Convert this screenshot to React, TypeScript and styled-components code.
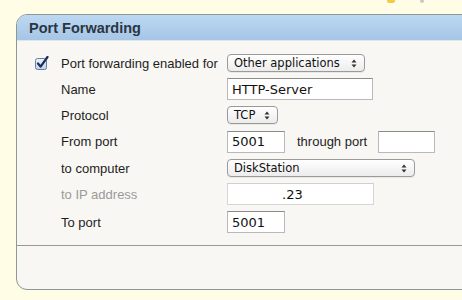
import React from 'react'
import styled, { createGlobalStyle } from 'styled-components'

const GlobalStyle = createGlobalStyle`
  html, body {
    margin: 0;
    padding: 0;
    background: #fffde6;
    overflow: hidden;
  }
  body {
    font-family: "Liberation Sans", Arial, sans-serif;
  }
`

const Page = styled.div`
  width: 462px;
  height: 300px;
  overflow: hidden;
`

const TopBar = styled.div`
  height: 14px;
  display: flex;
  align-items: flex-start;
  gap: 25px;
  padding-left: 387px;
`

const TopIcon = styled.span<{ $color: string; $w: number }>`
  display: block;
  width: ${(p) => p.$w}px;
  height: 3px;
  border-radius: 0 0 2px 2px;
  background: ${(p) => p.$color};
`

const Panel = styled.div`
  margin-left: 16px;
  margin-right: -30px;
  height: 274px;
  border: 1px solid #8e9892;
  border-radius: 11px;
  background: #f8f7f3;
  overflow: hidden;
  display: flex;
  flex-direction: column;
`

const Header = styled.div`
  height: 25px;
  flex: none;
  display: flex;
  align-items: center;
  padding-left: 12px;
  background: linear-gradient(#bcd8f2, #a6c6e6);
  border-bottom: 1px solid #dfe6ea;
  font-weight: bold;
  font-size: 14.5px;
  color: #2b3644;
`

const Body = styled.div`
  flex: none;
  height: 205px;
  padding-top: 9px;
  box-sizing: border-box;
  border-bottom: 1px solid #949c95;
`

const Form = styled.div`
  display: grid;
  grid-template-columns: 26px 166px 1fr;
  grid-template-rows: 26px 26px 26px 27px 26px 26px 30px;
  padding-left: 18px;
  align-items: center;
`

const CheckCell = styled.div`
  display: flex;
  align-items: center;
`

const Label = styled.div<{ $muted?: boolean }>`
  font-size: 13px;
  color: ${(p) => (p.$muted ? '#9a9a9a' : '#1e1e1e')};
  grid-column: 2;
`

const Control = styled.div`
  grid-column: 3;
  display: flex;
  align-items: center;
`

const Inline = styled.span`
  font-size: 13px;
  color: #1e1e1e;
  margin: 0 11px 0 12px;
`

const Select = styled.div<{ $w: number }>`
  width: ${(p) => p.$w}px;
  height: 18px;
  box-sizing: border-box;
  border: 1px solid #9a9a9a;
  border-radius: 4px;
  background: linear-gradient(#ffffff, #ececec);
  box-shadow: 0 1px 0 rgba(0, 0, 0, 0.06);
  display: flex;
  align-items: center;
  justify-content: space-between;
  padding: 0 7px 0 6px;
  font-family: "DejaVu Sans", Verdana, sans-serif;
  font-size: 11.5px;
  color: #111;
`

const Input = styled.div<{ $w: number; $indent?: number; $faint?: boolean }>`
  width: ${(p) => p.$w}px;
  height: 22px;
  box-sizing: border-box;
  border: 1px solid ${(p) => (p.$faint ? '#d6d6d6' : '#b9b9b9')};
  border-top-color: ${(p) => (p.$faint ? '#cfcfcf' : '#8c8c8c')};
  background: #fff;
  display: flex;
  align-items: center;
  padding-left: ${(p) => p.$indent ?? 4}px;
  font-family: "DejaVu Sans", Verdana, sans-serif;
  font-size: 13px;
  color: #111;
`

const Footer = styled.div`
  flex: 1;
`

const Arrows = () => (
  <svg width="6" height="9" viewBox="0 0 6 9">
    <path d="M3 0.5 L5.5 3.5 L0.5 3.5 Z" fill="#333" />
    <path d="M3 8.5 L5.5 5.5 L0.5 5.5 Z" fill="#333" />
  </svg>
)

const CheckBox = () => (
  <svg width="14" height="14" viewBox="0 0 14 14">
    <defs>
      <linearGradient id="cb" x1="0" y1="0" x2="0" y2="1">
        <stop offset="0" stopColor="#eef5fc" />
        <stop offset="1" stopColor="#b9d3ee" />
      </linearGradient>
    </defs>
    <rect x="0.5" y="2.5" width="11" height="11" rx="2" fill="url(#cb)" stroke="#6b7f97" />
    <path d="M3 7.5 L5.6 10.6 L12.5 1" fill="none" stroke="#1d2d5a" strokeWidth="2.2" strokeLinecap="round" strokeLinejoin="round" />
  </svg>
)

export default function App() {
  return (
    <Page>
      <GlobalStyle />
      <TopBar>
        <TopIcon $color="#f0cc4a" $w={8} />
        <TopIcon $color="#c9c9c9" $w={4} />
      </TopBar>
      <Panel>
        <Header>Port Forwarding</Header>
        <Body>
          <Form>
            <CheckCell>
              <CheckBox />
            </CheckCell>
            <Label>Port forwarding enabled for</Label>
            <Control>
              <Select $w={138}>
                Other applications <Arrows />
              </Select>
            </Control>

            <Label>Name</Label>
            <Control>
              <Input $w={146}>HTTP-Server</Input>
            </Control>

            <Label>Protocol</Label>
            <Control>
              <Select $w={51}>
                TCP <Arrows />
              </Select>
            </Control>

            <Label>From port</Label>
            <Control>
              <Input $w={58}>5001</Input>
              <Inline>through port</Inline>
              <Input $w={57} />
            </Control>

            <Label>to computer</Label>
            <Control>
              <Select $w={188}>
                DiskStation <Arrows />
              </Select>
            </Control>

            <Label $muted>to IP address</Label>
            <Control>
              <Input $w={147} $indent={54} $faint>.23</Input>
            </Control>

            <Label>To port</Label>
            <Control>
              <Input $w={58}>5001</Input>
            </Control>
          </Form>
        </Body>
        <Footer />
      </Panel>
    </Page>
  )
}
